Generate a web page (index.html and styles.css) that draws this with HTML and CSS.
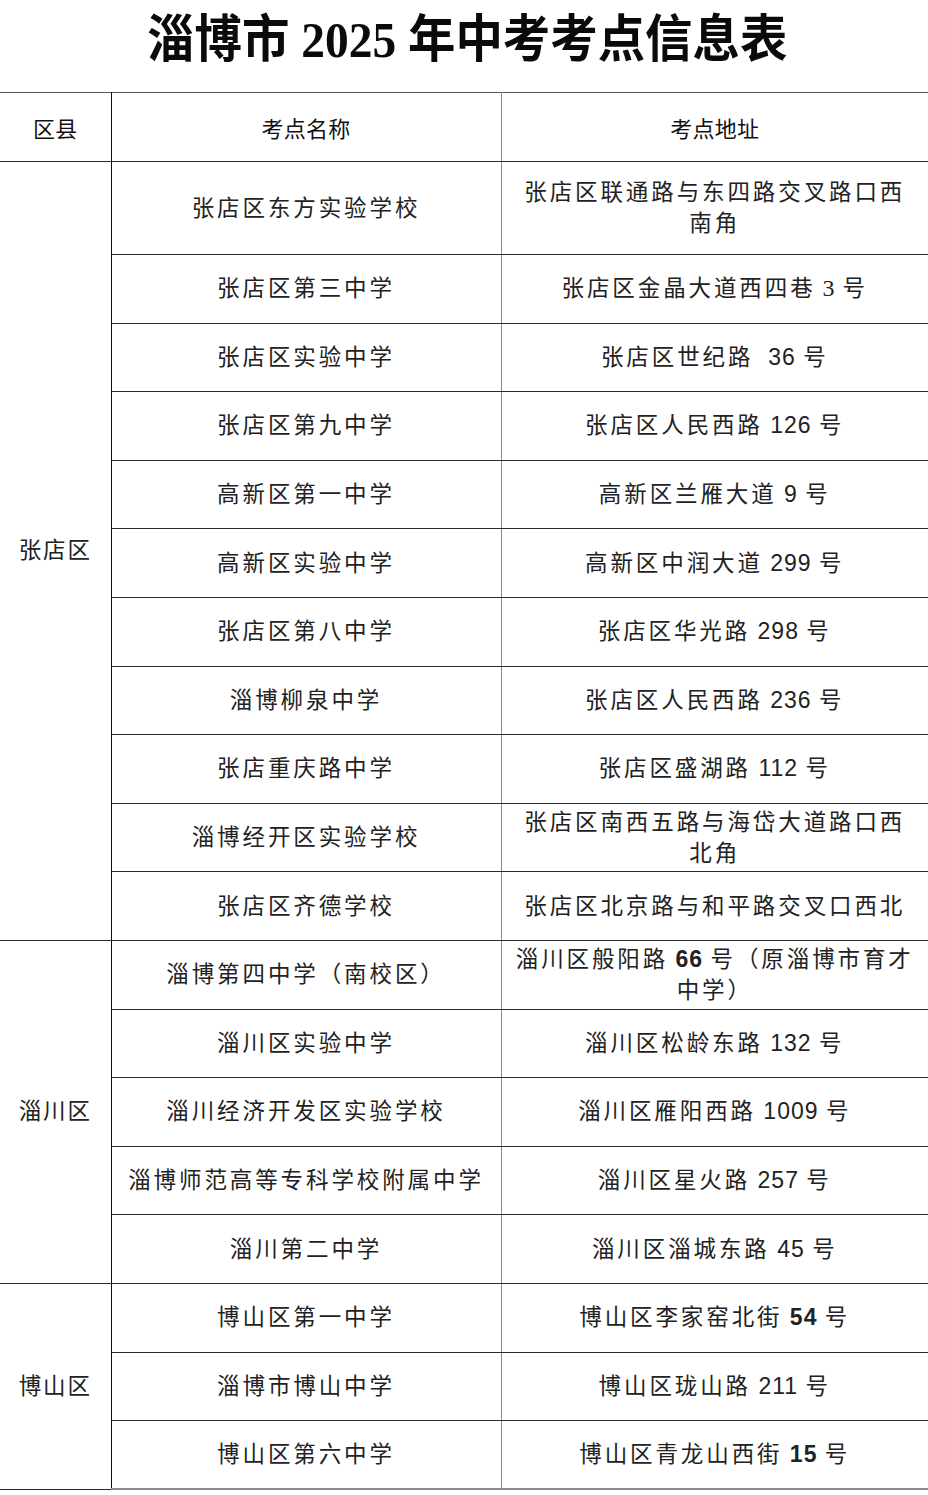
FILE: index.html
```html
<!DOCTYPE html>
<html lang="zh-CN">
<head>
<meta charset="utf-8">
<title>淄博市 2025 年中考考点信息表</title>
<link rel="stylesheet" href="styles.css">
</head>
<body>
<div class="page">
  <header class="title-bar">
    <h1 class="title">淄博市 2025 年中考考点信息表</h1>
  </header>
  <table class="sheet">
    <colgroup>
      <col class="c-dist">
      <col class="c-name">
      <col class="c-addr">
    </colgroup>
    <thead>
      <tr class="head">
        <th>区县</th>
        <th>考点名称</th>
        <th class="last">考点地址</th>
      </tr>
    </thead>
    <tbody>
      <tr class="tall">
        <td class="dist" rowspan="11">张店区</td>
        <td>张店区东方实验学校</td>
        <td class="last">张店区联通路与东四路交叉路口西<br>南角</td>
      </tr>
      <tr class="gray-top"><td>张店区第三中学</td><td class="last">张店区金晶大道西四巷<span class="n serif"> 3 </span>号</td></tr>
      <tr><td>张店区实验中学</td><td class="last">张店区世纪路<span class="n">&nbsp; 36 </span>号</td></tr>
      <tr><td>张店区第九中学</td><td class="last">张店区人民西路<span class="n"> 126 </span>号</td></tr>
      <tr><td>高新区第一中学</td><td class="last">高新区兰雁大道<span class="n"> 9 </span>号</td></tr>
      <tr><td>高新区实验中学</td><td class="last">高新区中润大道<span class="n"> 299 </span>号</td></tr>
      <tr><td>张店区第八中学</td><td class="last">张店区华光路<span class="n"> 298 </span>号</td></tr>
      <tr><td>淄博柳泉中学</td><td class="last">张店区人民西路<span class="n"> 236 </span>号</td></tr>
      <tr><td>张店重庆路中学</td><td class="last">张店区盛湖路<span class="n"> 112 </span>号</td></tr>
      <tr><td>淄博经开区实验学校</td><td class="last">张店区南西五路与海岱大道路口西<br>北角</td></tr>
      <tr class="gray-top"><td>张店区齐德学校</td><td class="last">张店区北京路与和平路交叉口西北</td></tr>
      <tr>
        <td class="dist" rowspan="5">淄川区</td>
        <td>淄博第四中学（南校区）</td>
        <td class="last">淄川区般阳路<span class="n b"> 66 </span>号（原淄博市育才<br>中学）</td>
      </tr>
      <tr class="gray-top"><td>淄川区实验中学</td><td class="last">淄川区松龄东路<span class="n"> 132 </span>号</td></tr>
      <tr><td>淄川经济开发区实验学校</td><td class="last">淄川区雁阳西路<span class="n"> 1009 </span>号</td></tr>
      <tr><td>淄博师范高等专科学校附属中学</td><td class="last">淄川区星火路<span class="n"> 257 </span>号</td></tr>
      <tr><td>淄川第二中学</td><td class="last">淄川区淄城东路<span class="n"> 45 </span>号</td></tr>
      <tr>
        <td class="dist" rowspan="3">博山区</td>
        <td>博山区第一中学</td>
        <td class="last">博山区李家窑北街<span class="n b"> 54 </span>号</td>
      </tr>
      <tr><td>淄博市博山中学</td><td class="last">博山区珑山路<span class="n"> 211 </span>号</td></tr>
      <tr><td>博山区第六中学</td><td class="last">博山区青龙山西街<span class="n b"> 15 </span>号</td></tr>
    </tbody>
  </table>
</div>
</body>
</html>
```

FILE: styles.css
```css
html, body {
  margin: 0;
  padding: 0;
  background: #ffffff;
}

.page {
  width: 928px;
  font-family: "Liberation Sans", "Noto Sans CJK SC", sans-serif;
  color: #1e1e1e;
}

.title-bar {
  height: 92px;
  display: flex;
  align-items: center;
  justify-content: center;
}

.title {
  margin: 0 0 12px 6px;
  font-family: "Liberation Serif", "Noto Sans CJK SC", serif;
  font-weight: 700;
  font-size: 51px;
  line-height: 1;
  color: #0a0a0a;
  transform: scaleX(0.93);
  white-space: nowrap;
}

.sheet {
  width: 928px;
  table-layout: fixed;
  border-collapse: collapse;
  border-spacing: 0;
}

.c-dist { width: 111px; }
.c-name { width: 390px; }
.c-addr { width: 427px; }

.sheet th,
.sheet td {
  padding: 0 6px;
  text-align: center;
  vertical-align: middle;
  border-top: 1px solid #2a2a2a;
  border-bottom: 1px solid #2a2a2a;
  border-left: 1px solid #222;
  border-right: 1px solid #8a8a8a;
  font-weight: 400;
}

.sheet th:first-child,
.sheet td.dist {
  border-left: none;
  border-right: 1px solid #111;
}

.sheet .last {
  border-left: 1px solid #8a8a8a;
  border-right: none;
}

.head {
  height: 69px;
}

.head th {
  font-size: 22px;
  color: #111;
  letter-spacing: 0.3px;
  border-top: 1px solid #555;
}

.sheet tbody tr {
  height: 68.6px;
}

.sheet tbody tr.tall {
  height: 93px;
}

.sheet td {
  font-size: 22.5px;
  letter-spacing: 2.9px;
  line-height: 31px;
  color: #222;
  white-space: nowrap;
}

.sheet td.dist {
  font-size: 22.5px;
  letter-spacing: 1.8px;
}

.sheet tr.gray-top td {
  border-top-color: #8c8c8c;
}

.sheet tbody tr:last-child td {
  border-bottom: 2px solid #8c8c8c;
}

.n {
  letter-spacing: 1px;
  font-size: 23px;
}

.n.serif {
  font-family: "Liberation Serif", serif;
  font-size: 24px;
}

.n.b {
  font-weight: 700;
}
```
